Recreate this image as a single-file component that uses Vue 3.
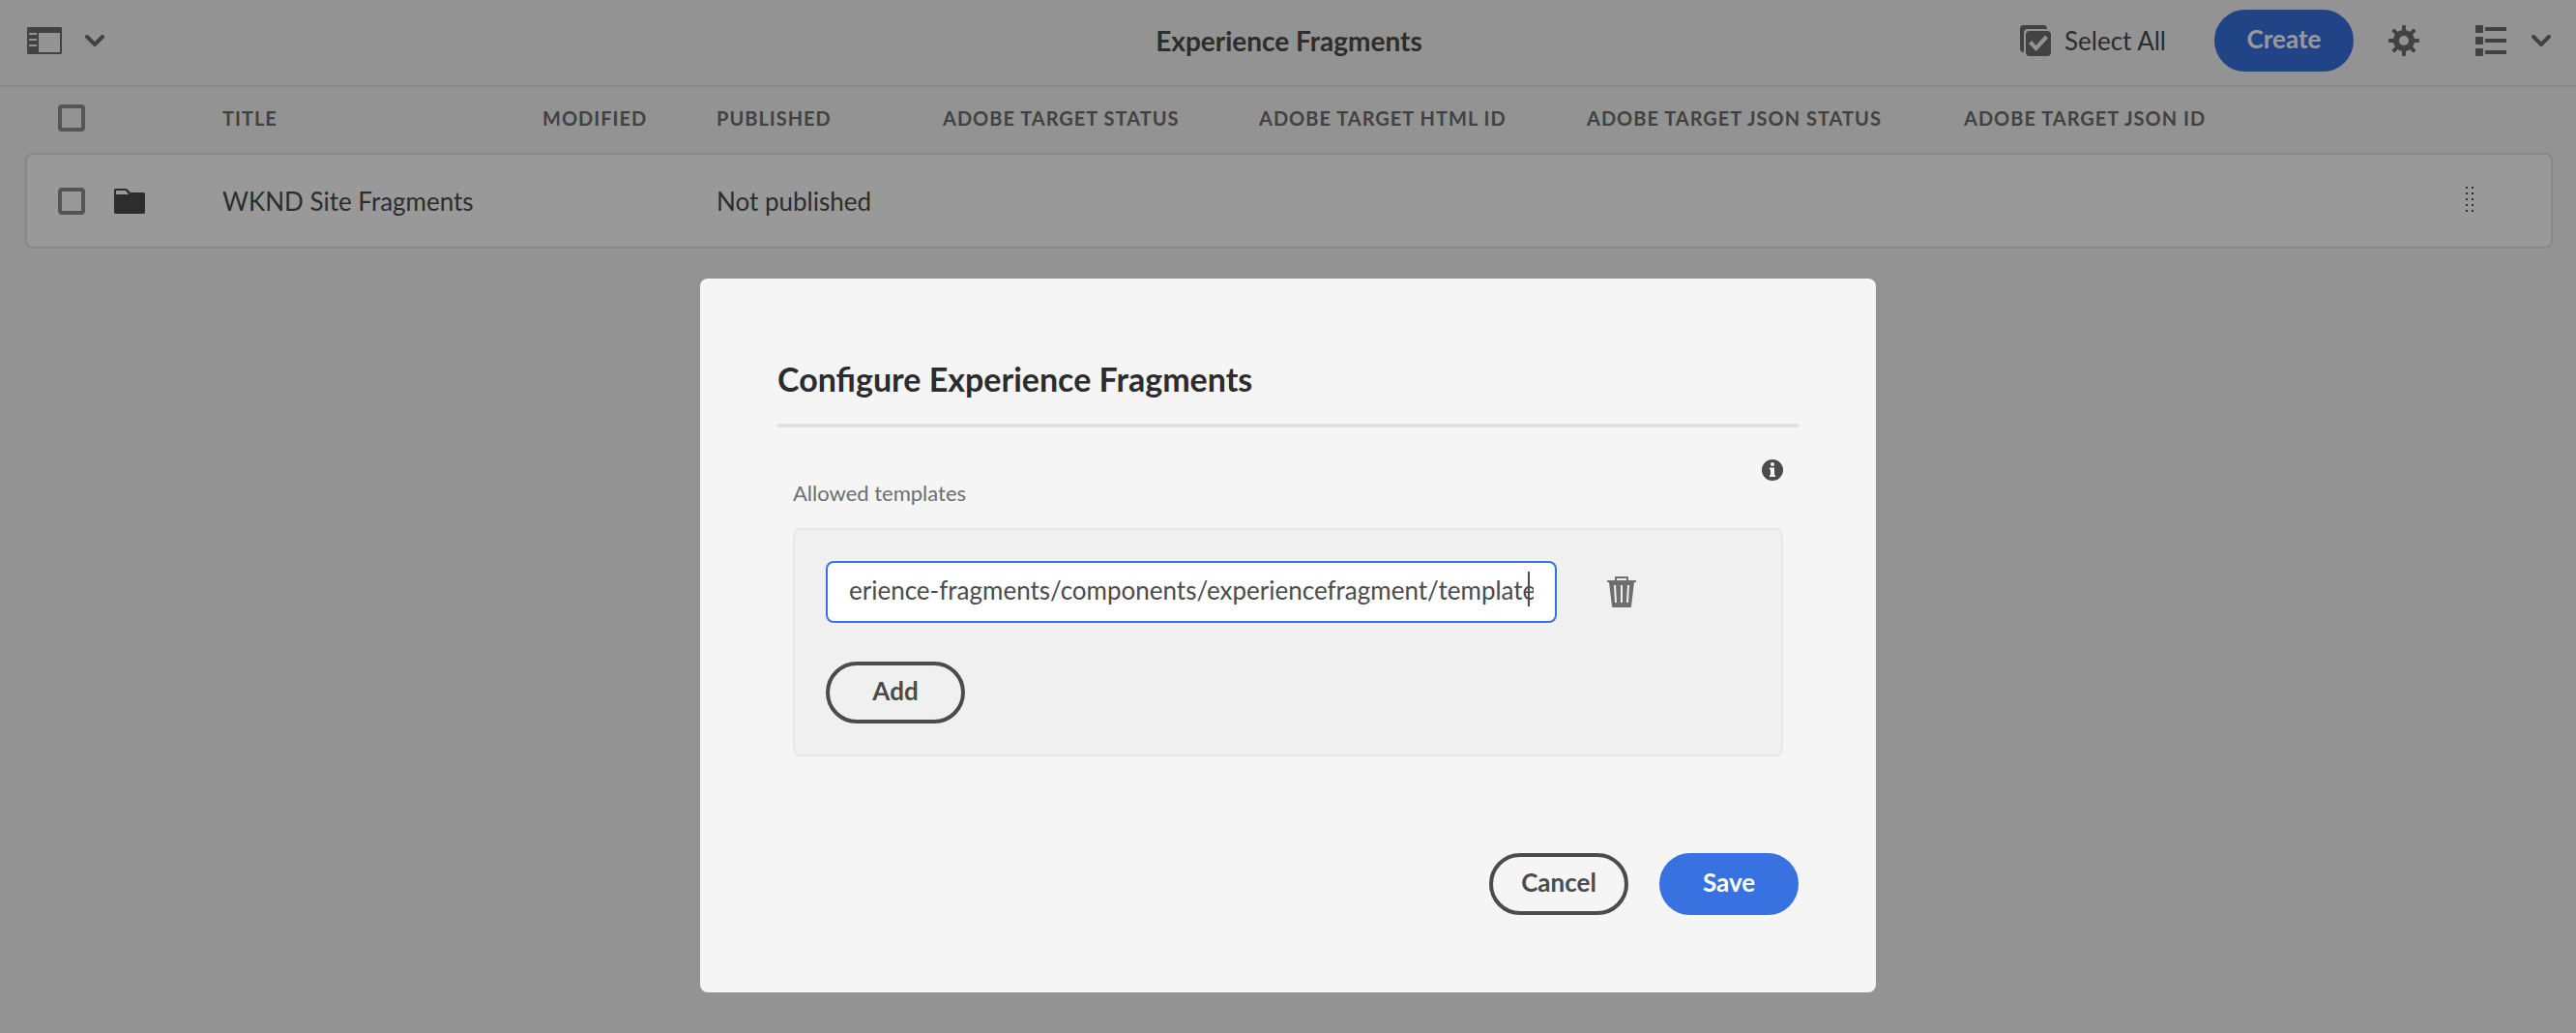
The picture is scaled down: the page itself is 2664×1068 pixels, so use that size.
<script setup>
import { ref } from 'vue'

const columns = [
  { label: 'Title', cls: 'c-title' },
  { label: 'Modified', cls: 'c-modified' },
  { label: 'Published', cls: 'c-published' },
  { label: 'Adobe Target Status', cls: 'c-status' },
  { label: 'Adobe Target HTML ID', cls: 'c-html' },
  { label: 'Adobe Target JSON Status', cls: 'c-json' },
  { label: 'Adobe Target JSON ID', cls: 'c-id' },
]
const rows = [{ cells: ['WKND Site Fragments', '', 'Not published', '', '', '', ''] }]
const handleDots = [0, 6, 12, 18, 24]
const gearTeeth = [0, 45, 90, 135, 180, 225, 270, 315]
const template = ref('erience-fragments/components/experiencefragment/template')
</script>

<template>
  <div class="page">
    <header class="topbar">
      <div class="side">
        <button class="icon-btn rail" type="button" aria-label="Toggle side panel">
          <svg width="36" height="28" viewBox="0 0 36 28">
            <path fill="currentColor" fill-rule="evenodd" d="M1 0H35L36 1V27L35 28H1L0 27V1ZM12 6V26H34V6ZM2 6V8H10V6ZM2 12V14H10V12ZM2 18V20H10V18Z" />
          </svg>
          <svg width="20" height="12" viewBox="0 0 20 12">
            <path d="M2 2L10 10L18 2" fill="none" stroke="currentColor" stroke-width="4" stroke-linecap="round" />
          </svg>
        </button>
      </div>
      <h1 class="page-title">Experience Fragments</h1>
      <div class="side actions">
        <button class="icon-btn select-all" type="button">
          <svg width="32" height="32" viewBox="0 0 32 32">
            <path fill="currentColor" d="M4 0H24Q28 0 28 4H8Q4 4 4 8V28Q0 28 0 24V4Q0 0 4 0Z" />
            <path fill="currentColor" fill-rule="evenodd" d="M10 6H28Q32 6 32 10V28Q32 32 28 32H10Q6 32 6 28V10Q6 6 10 6ZM9 19L16.500 27L29 13.500L26 10.500L16.500 21L12 16Z" />
          </svg>
          <span>Select All</span>
        </button>
        <button class="btn primary" type="button">Create</button>
        <button class="icon-btn gear" type="button" aria-label="Configure">
          <svg width="32" height="32" viewBox="0 0 32 32" fill="currentColor">
            <rect v-for="a in gearTeeth" :key="a" x="14" y="0" width="4" height="8" rx="1" :transform="`rotate(${a} 16 16)`" />
            <path fill-rule="evenodd" d="M16 5A11 11 0 1 1 16 27A11 11 0 1 1 16 5ZM16 11A5 5 0 1 0 16 21A5 5 0 1 0 16 11Z" />
          </svg>
        </button>
        <button class="icon-btn view" type="button" aria-label="List view">
          <svg width="32" height="32" viewBox="0 0 32 32" fill="currentColor">
            <g v-for="y in [0, 12, 24]" :key="y">
              <rect x="0" :y="y" width="8" height="8" rx="1" />
              <rect x="10" :y="y + 2" width="22" height="4" />
            </g>
          </svg>
          <svg width="20" height="12" viewBox="0 0 20 12">
            <path d="M2 2L10 10L18 2" fill="none" stroke="currentColor" stroke-width="4" stroke-linecap="round" />
          </svg>
        </button>
      </div>
    </header>

    <main class="content">
      <table class="list">
        <thead>
          <tr>
            <th class="c-check"><input type="checkbox" aria-label="Select all items" /></th>
            <th class="c-icon"></th>
            <th v-for="c in columns" :key="c.label" :class="c.cls" scope="col">{{ c.label }}</th>
            <th class="c-handle"></th>
          </tr>
        </thead>
        <tbody>
          <tr v-for="row in rows" :key="row.cells[0]">
            <td class="c-check"><input type="checkbox" :aria-label="row.cells[0]" /></td>
            <td>
              <svg class="folder" width="32" height="26" viewBox="0 0 32 26">
                <path fill="currentColor" fill-rule="evenodd" d="M1 0H12Q13 0 14 1L17 4H31L32 5V25L31 26H1L0 25V1ZM2 2V6H15L12 2Z" />
              </svg>
            </td>
            <td v-for="(cell, i) in row.cells" :key="i">{{ cell }}</td>
            <td>
              <svg class="handle" width="8" height="26" viewBox="0 0 8 26" fill="currentColor">
                <g v-for="y in handleDots" :key="y">
                  <rect x="0" :y="y" width="2" height="2" />
                  <rect x="6" :y="y" width="2" height="2" />
                </g>
              </svg>
            </td>
          </tr>
        </tbody>
      </table>
    </main>

    <div class="backdrop">
      <section class="dialog" role="dialog" aria-labelledby="dialog-title">
        <h2 id="dialog-title" class="dialog-title">Configure Experience Fragments</h2>
        <form class="form" @submit.prevent>
          <div class="label-row">
            <label for="template">Allowed templates</label>
            <svg class="info" width="22" height="22" viewBox="0 0 22 22">
              <circle cx="11" cy="11" r="11" fill="#4b4b4b" />
              <circle cx="11" cy="5" r="2" fill="#f5f5f5" />
              <path fill="#f5f5f5" d="M8 8.500H13V16H14V18H8V16H9V10.500H8Z" />
            </svg>
          </div>
          <div class="well">
            <div class="field-row">
              <div class="field">
                <input id="template" v-model="template" type="text" />
                <span class="caret"></span>
              </div>
              <button class="icon-btn" type="button" aria-label="Delete">
                <svg width="30" height="32" viewBox="0 0 30 32">
                  <path fill="currentColor" fill-rule="evenodd" d="M8 4V1Q8 0 9 0H21Q22 0 22 1V4H30V6H28L25 31Q25 32 24 32H6Q5 32 5 31L2 6H0V4ZM10 2V4H20V2ZM7 9L8 27H10L9 9ZM14 9V27H16V9ZM21 9L20 27H22L23 9Z" />
                </svg>
              </button>
            </div>
            <button class="btn outline" type="button">Add</button>
          </div>
          <div class="footer">
            <button class="btn outline" type="button">Cancel</button>
            <button class="btn primary" type="submit">Save</button>
          </div>
        </form>
      </section>
    </div>
  </div>
</template>

<style>
body {
  margin: 0;
  background: #f5f5f5;
}
</style>

<style scoped>
.page {
  min-height: 100vh;
  color: #4b4b4b;
  font: 26px/32px Lato, "Noto Sans", sans-serif;
}
.page * {
  box-sizing: border-box;
}
button,
input {
  margin: 0;
  font: inherit;
  color: inherit;
}
svg {
  display: block;
  flex: none;
}
.topbar {
  display: grid;
  grid-template-columns: 1fr auto 1fr;
  align-items: center;
  height: 90px;
  padding: 0 26px 4px 28px;
  border-bottom: 2px solid #e3e3e3;
}
.side {
  display: flex;
  align-items: center;
}
.actions {
  justify-content: flex-end;
}
.page-title {
  margin: 0;
  font-size: 28px;
  font-weight: 700;
}
.icon-btn {
  display: flex;
  align-items: center;
  padding: 0;
  border: 0;
  background: none;
  color: #6e6e6e;
}
.rail {
  gap: 24px;
}
.select-all {
  gap: 14px;
  margin-right: 50px;
}
.select-all span {
  color: #4b4b4b;
}
.gear {
  margin: 0 58px 0 36px;
}
.view {
  gap: 26px;
}
.btn {
  width: 144px;
  height: 64px;
  padding: 0 0 4px;
  border: 4px solid #4b4b4b;
  border-radius: 32px;
  background: none;
  font-weight: 700;
}
.primary {
  border-color: #3872e0;
  background: #3872e0;
  color: #fff;
}
.content {
  padding: 0 24px 0 26px;
}
.list {
  width: 100%;
  border-spacing: 0;
  text-align: left;
}
.list th,
.list td {
  padding: 0;
}
.list th {
  height: 68px;
  padding-bottom: 4px;
  color: #6e6e6e;
  font-size: 20px;
  letter-spacing: 1px;
  text-transform: uppercase;
}
.list td {
  height: 99px;
  border: solid #e3e3e3;
  border-width: 2px 0;
  background: #fff;
}
.list td:first-child {
  border-left-width: 2px;
  border-radius: 8px 0 0 8px;
}
.list td:last-child {
  border-right-width: 2px;
  border-radius: 0 8px 8px 0;
}
.list th.c-check {
  width: 92px;
  padding-left: 34px;
}
.list td.c-check {
  padding-left: 32px;
}
.c-icon { width: 112px; }
.c-title { width: 331px; }
.c-modified { width: 180px; }
.c-published { width: 234px; }
.c-status { width: 327px; }
.c-html { width: 339px; }
.c-json { width: 390px; }
.c-handle { width: 90px; }
.list input {
  display: block;
  width: 28px;
  height: 28px;
  border: 4px solid #8e8e8e;
  border-radius: 4px;
  appearance: none;
}
.handle {
  margin-bottom: 4px;
}
.backdrop {
  position: fixed;
  inset: 0;
  display: flex;
  align-items: flex-start;
  justify-content: center;
  padding-top: 288px;
  overflow: auto;
  background: rgba(0, 0, 0, 0.4);
}
.dialog {
  width: 1216px;
  max-width: 100%;
  padding: 80px;
  border-radius: 8px;
  background: #f5f5f5;
}
.dialog-title {
  margin: 0;
  padding: 4px 0 26px;
  border-bottom: 4px solid #e1e1e1;
  color: #2c2c2c;
  font-size: 34px;
  line-height: 40px;
}
.form {
  padding-top: 33px;
}
.label-row {
  display: flex;
  justify-content: space-between;
  padding: 0 16px;
}
.label-row label {
  padding: 19px 0 20px;
  color: #6e6e6e;
  font-size: 22px;
}
.well {
  margin: 0 16px;
  padding: 32px;
  border: 2px solid #e8e8e8;
  border-radius: 8px;
  background: #f0f0f0;
}
.field-row {
  display: flex;
  align-items: center;
  gap: 52px;
  margin-bottom: 40px;
}
.field {
  position: relative;
  width: 756px;
}
.field input {
  display: block;
  width: 100%;
  height: 64px;
  padding: 0 22px 4px;
  border: 2px solid #3872e0;
  border-radius: 8px;
  outline: 0;
  background: #fff;
}
.caret {
  position: absolute;
  top: 11px;
  right: 28px;
  width: 2px;
  height: 36px;
  background: #4b4b4b;
}
.footer {
  display: flex;
  justify-content: flex-end;
  gap: 32px;
  padding-top: 100px;
}
</style>
